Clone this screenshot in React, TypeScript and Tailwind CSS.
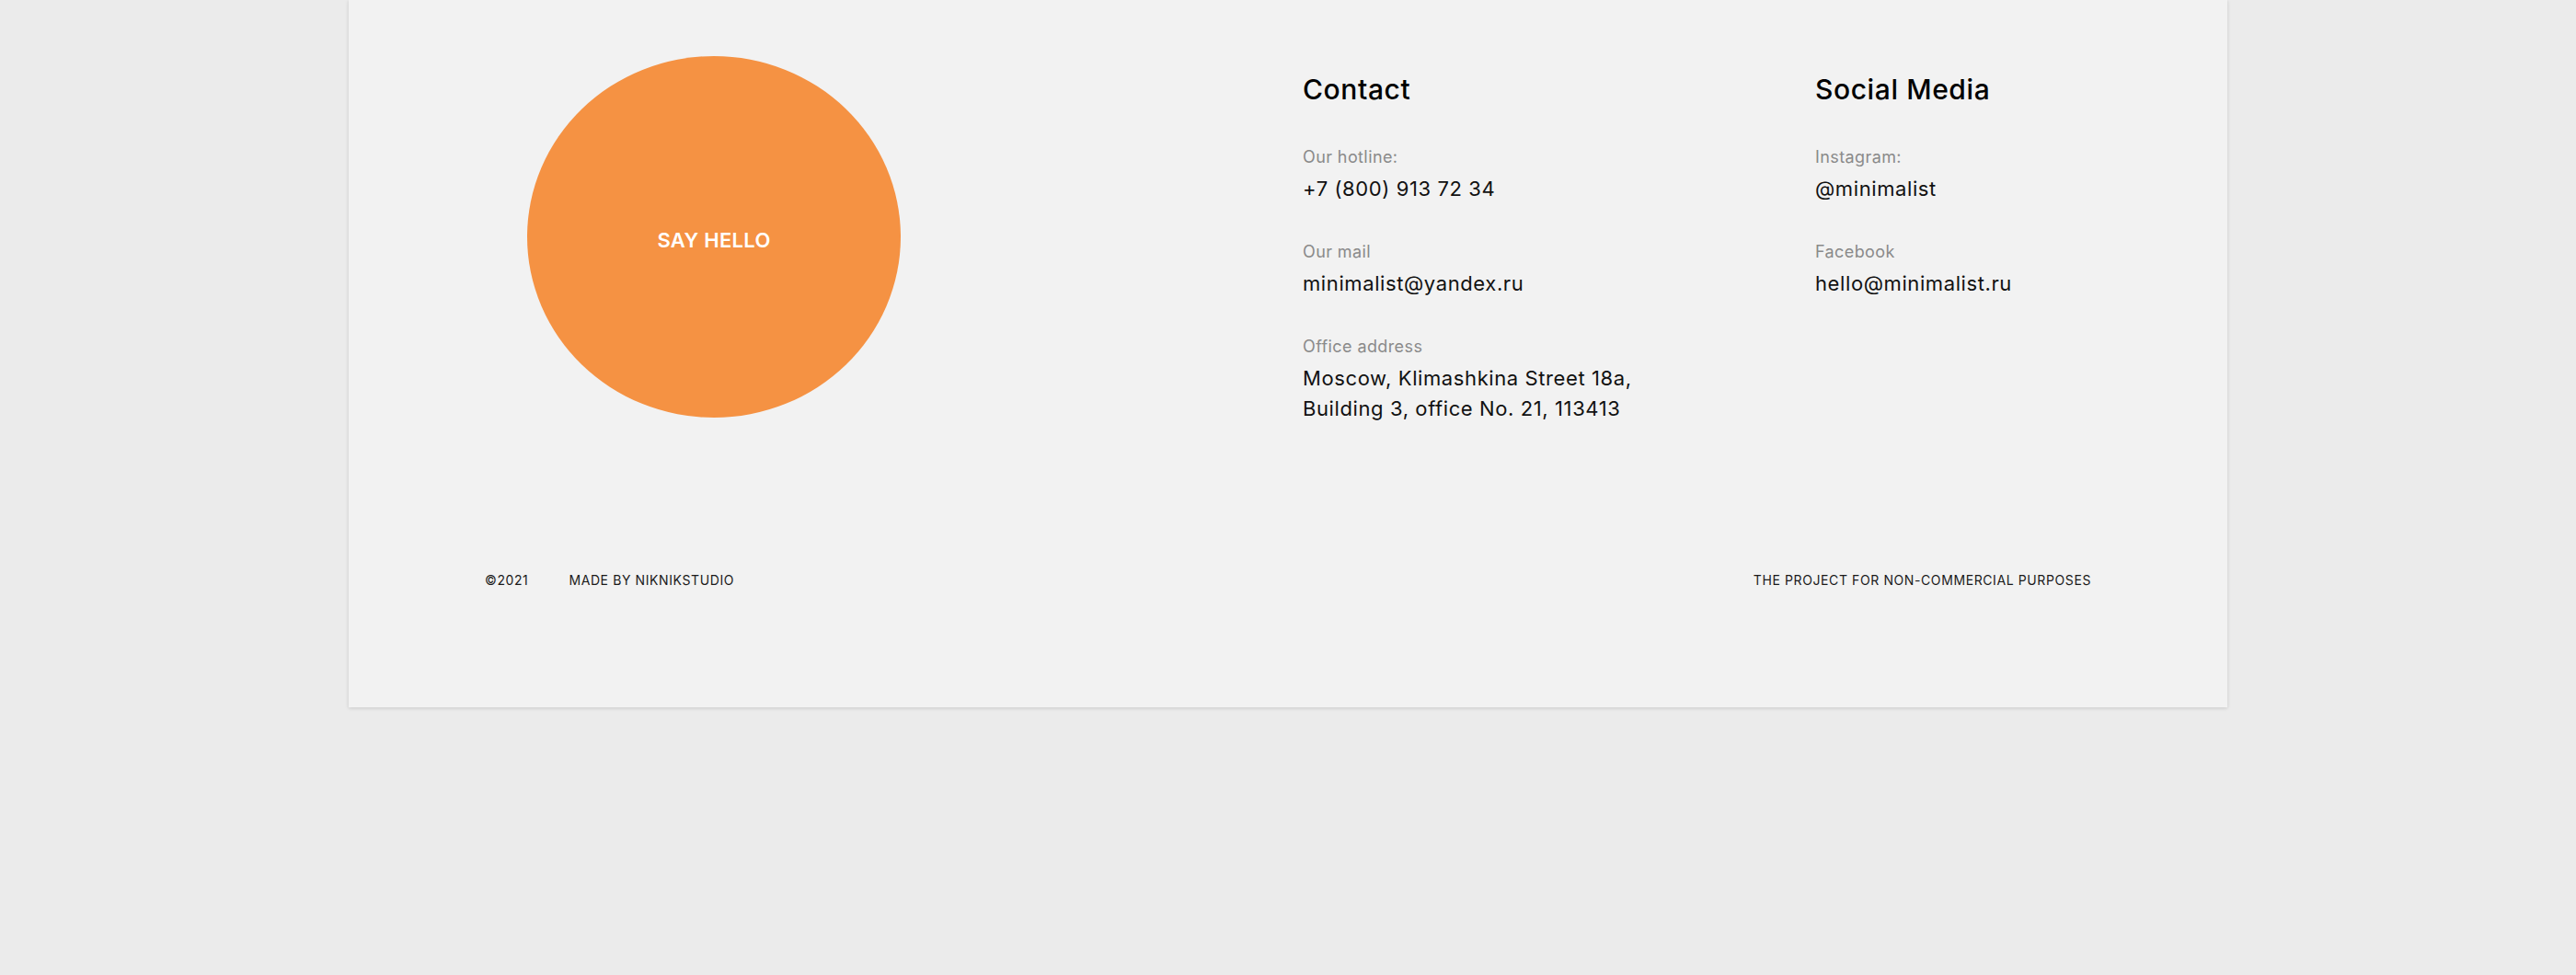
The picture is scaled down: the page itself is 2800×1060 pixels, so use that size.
const contacts = [
  { label: 'Our hotline:', value: ['+7 (800) 913 72 34'] },
  { label: 'Our mail', value: ['minimalist@yandex.ru'] },
  { label: 'Office address', value: ['Moscow, Klimashkina Street 18a,', 'Building 3, office No. 21, 113413'] },
];

const socials = [
  { label: 'Instagram:', value: ['@minimalist'] },
  { label: 'Facebook', value: ['hello@minimalist.ru'] },
];

type Item = { label: string; value: string[] };

const InfoColumn = ({ title, items, width }: { title: string; items: Item[]; width: string }) => {
  return (
    <div className={`mt-[18px] ${width}`}>
      <h3 className="text-[30px] leading-[36px] font-medium text-black tracking-[0.6px] mb-[44px]">{title}</h3>
      <div className="flex flex-col gap-[40px]">
        {items.map((item) => (
          <div key={item.label}>
            <p className="text-[18px] leading-[24px] text-[#8a8a8a] tracking-[0.4px]">{item.label}</p>
            <p className="mt-[6px] text-[22px] leading-[33px] text-[#111] tracking-[0.6px]">
              {item.value.map((line) => (
                <span key={line} className="block">{line}</span>
              ))}
            </p>
          </div>
        ))}
      </div>
    </div>
  );
};

export default function App() {
  return (
    <div className="min-h-[1060px] bg-[#ebebeb] font-['Inter','Noto_Sans',sans-serif]">
      <footer className="mx-auto w-[2042px] bg-[#f2f2f2] shadow-[0_1px_4px_rgba(0,0,0,0.15)] pt-[61px] pb-[128px]">
        <div className="flex items-start">
          <button className="ml-[194px] w-[406px] h-[393px] shrink-0 rounded-[50%] bg-[#f59243] flex items-center justify-center text-white text-[22px] font-semibold tracking-[0.3px] pt-[7px]">
            SAY HELLO
          </button>
          <div className="ml-[437px]">
            <InfoColumn title="Contact" items={contacts} width="w-[557px]" />
          </div>
          <InfoColumn title="Social Media" items={socials} width="w-[320px]" />
        </div>

        <div className="mt-[160px] px-[148px] flex justify-between text-[14px] leading-[20px] text-[#1a1a1a] tracking-[0.6px] uppercase">
          <div className="flex gap-[44px]">
            <span>©2021</span>
            <span>Made by niknikstudio</span>
          </div>
          <span>The project for non-commercial purposes</span>
        </div>
      </footer>
    </div>
  );
}
